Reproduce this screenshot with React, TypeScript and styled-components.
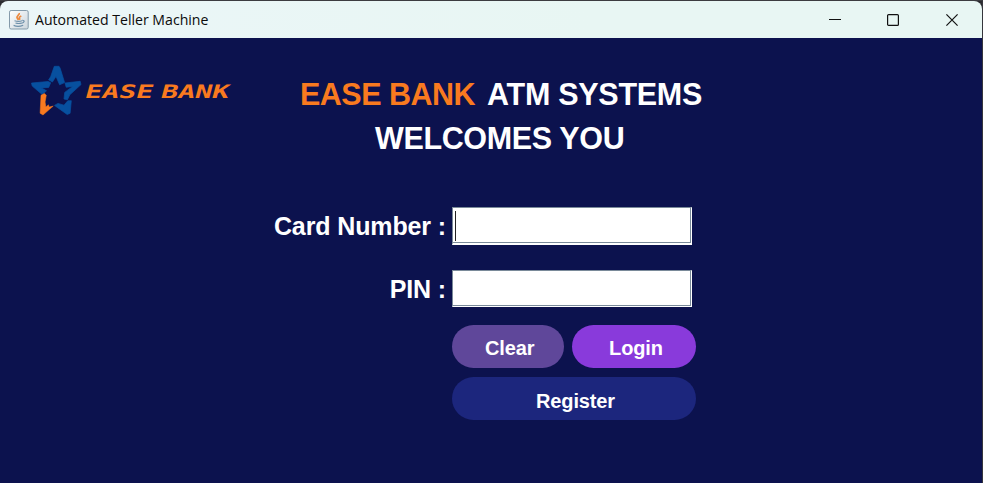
import React from "react";
import styled, { createGlobalStyle } from "styled-components";

const GlobalStyle = createGlobalStyle`
  *, *::before, *::after { box-sizing: border-box; }
  html, body { margin: 0; padding: 0; background: #2b2b30; overflow: hidden; }
  body { font-family: "Liberation Sans", Arial, sans-serif; }
`;

const Window = styled.div`
  width: 983px;
  height: 483px;
  display: flex;
  flex-direction: column;
  border-top: 1px solid #3c3c40;
  border-right: 1px solid #36363c;
  background: #2b2b30;
`;

const TitleBar = styled.header`
  height: 37px;
  flex: none;
  display: flex;
  align-items: center;
  padding-left: 9px;
  border-radius: 8px 8px 0 0;
  background: linear-gradient(90deg, #ebf6f8, #e8f6f3 60%);
`;

const Caption = styled.span`
  flex: 1;
  margin-left: 6px;
  font: 14.4px/20px "Open Sans", "Noto Sans", sans-serif;
  color: #0b0b0b;
`;

const CaptionText = styled.span`
  display: inline-block;
  transform-origin: left;
  transform: scaleX(0.98);
`;

const Controls = styled.div`
  display: flex;
  height: 100%;
`;

const Control = styled.button<{ $width: number }>`
  width: ${(p) => p.$width}px;
  padding: 0;
  border: 0;
  background: none;
  display: flex;
  align-items: center;
  justify-content: center;
`;

const Content = styled.main`
  flex: 1;
  padding: 26px 0 0 0;
  background: #0c124e;
`;

const Top = styled.div`
  display: flex;
  height: 143px;
`;

const Logo = styled.div`
  display: flex;
  width: 300px;
  padding-left: 29px;
`;

const Heading = styled.h1`
  margin: 8px 0 0;
  width: 402px;
  font-size: 30.5px;
  line-height: 44px;
  font-weight: 700;
  color: #fff;
  white-space: nowrap;
`;

const HeadingLine = styled.div`
  display: flex;
  justify-content: space-between;
  letter-spacing: -0.28px;
`;

const Welcome = styled.div`
  padding-left: 75px;
  letter-spacing: -0.36px;
`;

const Brand = styled.span`
  color: #f97a1f;
  letter-spacing: -0.5px;
`;

const Form = styled.form`
  display: grid;
  grid-template-columns: 446px 244px;
  column-gap: 6px;
`;

const Label = styled.label<{ $height: number }>`
  height: ${(p) => p.$height}px;
  line-height: 39px;
  font-size: 25px;
  letter-spacing: -0.12px;
  font-weight: 700;
  color: #fff;
  text-align: right;
  white-space: nowrap;
`;

const Field = styled.div<{ $height: number; $bottom: number }>`
  width: 240px;
  height: ${(p) => p.$height}px;
  padding: 3px 2px;
  background: #fff;
  border: 1px solid #fff;
  border-top-color: #7a8a99;
  border-left-color: #7a8a99;
  border-bottom-width: ${(p) => p.$bottom}px;
  box-shadow: inset -1px -1px 0 #7a8a99;
`;

const Caret = styled.div`
  width: 1px;
  height: 30px;
  background: #222;
`;

const Actions = styled.div`
  grid-column: 2;
  display: grid;
  grid-template-columns: 111.5px 124px;
  grid-template-rows: 42.5px 42.5px;
  gap: 9.7px 8.5px;
`;

const Action = styled.button<{ $color: string; $wide?: boolean }>`
  grid-column: ${(p) => (p.$wide ? "1 / -1" : "auto")};
  padding: ${(p) => (p.$wide ? "6px 0 0 3px" : "4px 0 0 4px")};
  border: 0;
  border-radius: 22px;
  background: ${(p) => p.$color};
  color: #fff;
  font: 700 20px/23px "Liberation Sans", Arial, sans-serif;
  letter-spacing: -0.12px;
`;

function JavaIcon() {
  return (
    <svg width="20" height="20" viewBox="0 0 20 20" fill="none">
      <defs>
        <linearGradient id="java" x1="0" y1="0" x2="1" y2="1">
          <stop offset="0" stopColor="#fff" />
          <stop offset="1" stopColor="#cbd5dc" />
        </linearGradient>
      </defs>
      <rect x=".5" y=".5" width="18.7" height="18.5" rx="1.6" fill="url(#java)" stroke="#849aaa" />
      <path d="M10.3 3c.5 2-3.4 3-2.1 5.1L9.5 10M12.3 6c-2.4 1-2.4 1.8-1.3 3.7" stroke="#ed893e" strokeWidth="1.7" />
      <path d="M5.5 10.8c2 .6 5.8.6 7.5 0M6.5 13c2 .6 4.5.6 6 0M4.6 15.4c2.5 1.1 7 1 9.6-.2M13.3 10.4c3-.2 2 2.4-.7 2.7" stroke="#6f91ab" strokeWidth="1.2" />
    </svg>
  );
}

function BankLogo() {
  return (
    <svg width="206" height="54" viewBox="0 0 206 54" role="img">
      <g fill="#07509f" stroke="#07509f" strokeWidth=".7" strokeLinejoin="round">
        <path d="M25.3 2.3h4.7l1.2 2 4.4 14.3-5 2.2-3.6-8.4-3.6 5.6-3.8-2.2 2-3z" />
        <path d="M2.5 19l16.6-1.5 2.6 1.2-2 4.7-7.2.5 5 2.9-4.3 3.8L3.2 22z" />
        <path d="M36 19l15.2-1.7.8 3.3-11.2 10.2-2.4 5-3.4-.8.7-6.6 8-6-6.5.9z" />
        <path d="M42.3 36.7l-1.2 12.6-2.9 1.2-12.7-9.1 3.5-2 6 1.8 3.8-4.4z" />
      </g>
      <path d="M12 31.3l3.4-1.9 1.9 1.8-1.2 6.8.8 5 2.5-2.2.8 2.3 4-1L14 51l-2.9-1.8z" fill="#f97a1f" stroke="#f97a1f" strokeWidth=".5" strokeLinejoin="round" />
      <g
        fill="#f97a1f"
        fontFamily="'DejaVu Sans Mono', monospace"
        fontWeight="700"
        fontSize="18.5"
      >
        <text transform="translate(54.8 33.6) skewX(-15)" textLength="68" lengthAdjust="spacingAndGlyphs">EASE</text>
        <text transform="translate(130.8 33.6) skewX(-15)" textLength="68" lengthAdjust="spacingAndGlyphs">BANK</text>
      </g>
    </svg>
  );
}

export default function App() {
  return (
    <>
      <GlobalStyle />
      <Window>
        <TitleBar>
          <JavaIcon />
          <Caption><CaptionText>Automated Teller Machine</CaptionText></Caption>
          <Controls>
            <Control $width={58} aria-label="Minimize">
              <svg width="12" height="12"><path d="M0 5.5h12" stroke="#111" /></svg>
            </Control>
            <Control $width={58} aria-label="Maximize">
              <svg width="12" height="12"><rect x=".6" y=".6" width="10.8" height="10.8" rx="1" fill="none" stroke="#111" strokeWidth="1.2" /></svg>
            </Control>
            <Control $width={60} aria-label="Close">
              <svg width="12" height="12"><path d="M.4.4l11.2 11.2M11.6.4L.4 11.6" stroke="#111" strokeWidth="1.2" /></svg>
            </Control>
          </Controls>
        </TitleBar>
        <Content>
          <Top>
            <Logo><BankLogo /></Logo>
            <Heading>
              <HeadingLine><Brand>EASE BANK</Brand><span>ATM SYSTEMS</span></HeadingLine>
              <Welcome>WELCOMES YOU</Welcome>
            </Heading>
          </Top>
          <Form>
            <Label $height={63}>Card Number :</Label>
            <Field $height={38} $bottom={2}><Caret /></Field>
            <Label $height={55}>PIN :</Label>
            <Field $height={37} $bottom={1} />
            <Actions>
              <Action type="button" $color="#5f479a">Clear</Action>
              <Action type="button" $color="#893adb">Login</Action>
              <Action type="button" $color="#1c267d" $wide>Register</Action>
            </Actions>
          </Form>
        </Content>
      </Window>
    </>
  );
}
